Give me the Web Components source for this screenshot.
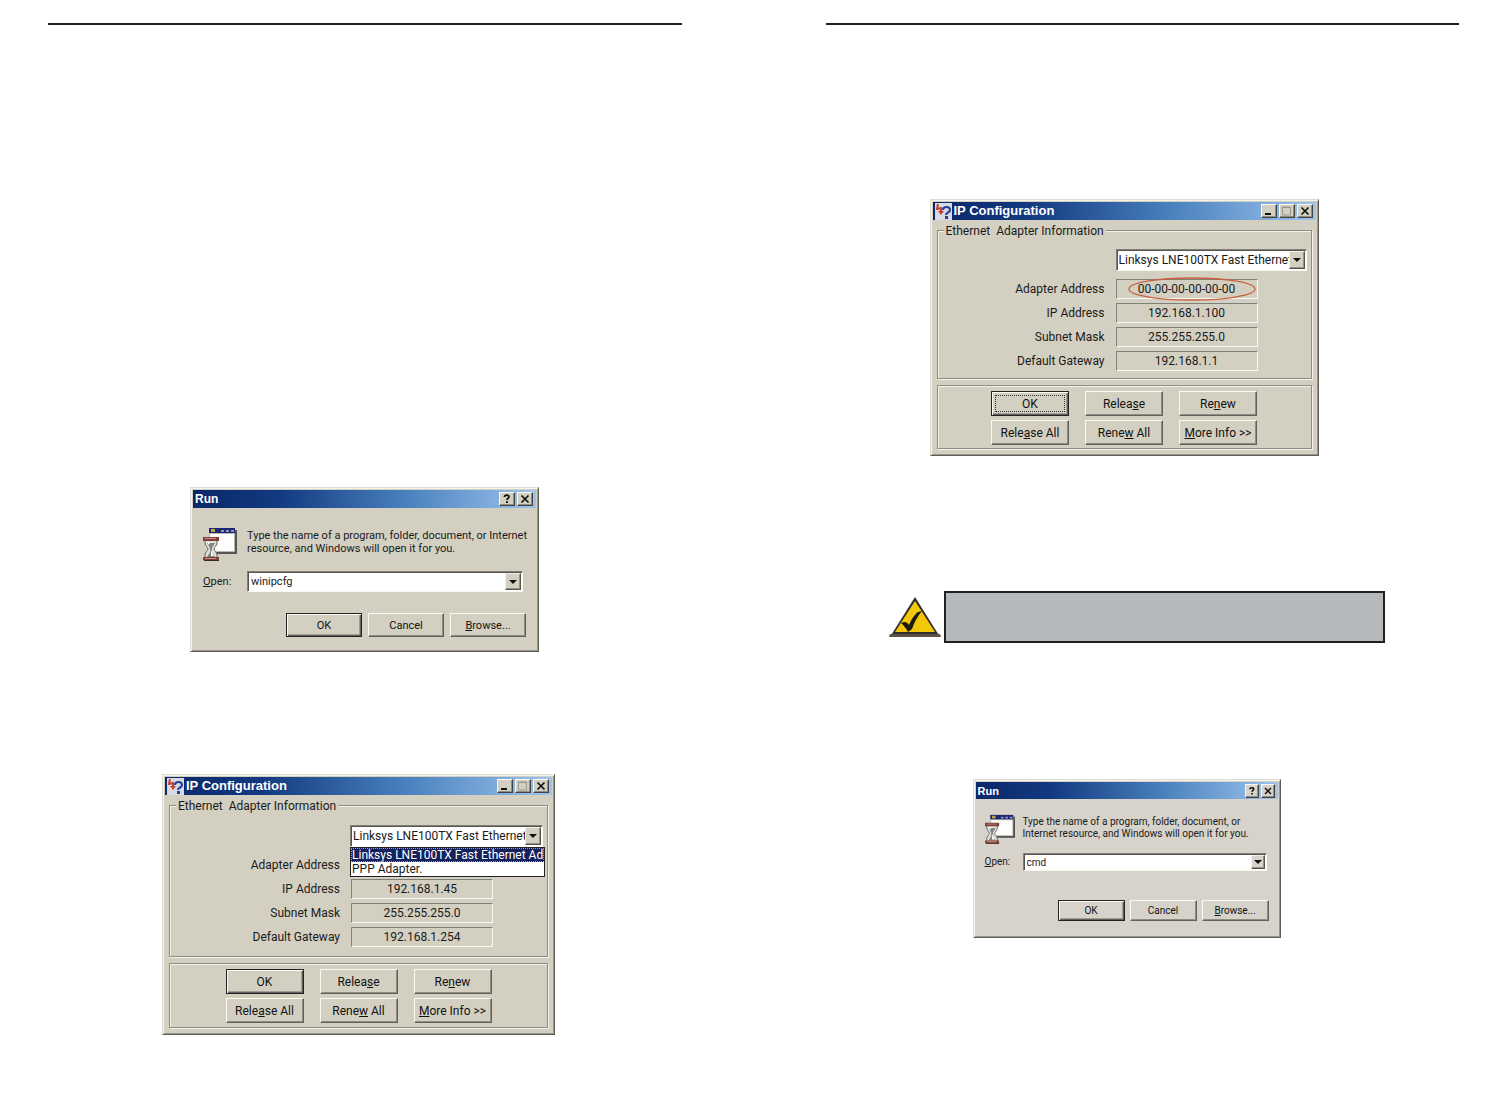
<!DOCTYPE html>
<html lang="en">
<head>
<meta charset="utf-8">
<title>IP Configuration</title>
<style>
  body {
    margin: 0;
    background: #fff;
    font-family: "Liberation Sans", Arial, sans-serif;
  }
  manual-spread {
    min-height: 100vh;
  }
  .run-winipcfg { width: 349px; margin: 462px 0 0 142px; }
  .ip-list { width: 393px; margin: 122px 0 0 114px; --fields-top: 19px; --fields-bottom: 9px; --actions-bottom: 4px; --combo-width: 193px; --indent: 50px; }
  .ip-address { width: 389px; margin: 174px 0 0 104px; }
  .note { margin: 135px 74px 0 63px; }
  .run-cmd { width: 308px; margin: 136px 0 0 147px; }
</style>
</head>
<body>

<manual-spread>
  <manual-page>
    <run-dialog class="run-winipcfg" value="winipcfg">
      Type the name of a program, folder, document, or Internet<br>resource, and Windows will open it for you.
    </run-dialog>
    <ip-config class="ip-list" open ip="192.168.1.45" mask="255.255.255.0" gateway="192.168.1.254"></ip-config>
  </manual-page>
  <manual-page>
    <ip-config class="ip-address" focused mac="00-00-00-00-00-00" ip="192.168.1.100" mask="255.255.255.0" gateway="192.168.1.1"></ip-config>
    <note-box class="note"></note-box>
    <run-dialog class="run-cmd" compact value="cmd">
      Type the name of a program, folder, document, or<br>Internet resource, and Windows will open it for you.
    </run-dialog>
  </manual-page>
</manual-spread>

<script>
const sunken = `
  border: 1px solid;
  border-color: #808078 #fbfaf2 #fbfaf2 #808078;
`;

const arrowStyle = `
  .arrow {
    display: flex;
    align-items: center;
    justify-content: center;
    box-sizing: border-box;
    width: 16px;
    padding: 0;
    background: var(--face, #d3d0c2);
    border: 1px solid;
    border-color: #f4f2e8 #55544f #55544f #f4f2e8;
    box-shadow: inset -1px -1px #96948a;
  }
  .arrow::before {
    content: '';
    border: 4px solid transparent;
    border-top-color: #111;
    border-bottom: 0;
  }
`;

const define = (name, html, setup) => {
  const template = document.createElement('template');
  template.innerHTML = html;
  customElements.define(name, class extends HTMLElement {
    constructor() {
      super();
      this.attachShadow({mode: 'open'});
      this.shadowRoot.appendChild(template.content.cloneNode(true));
    }
    connectedCallback() {
      if (setup) {
        setup(this, this.shadowRoot);
      }
    }
  });
};

define('manual-spread', `
  <style>
    :host {
      display: grid;
      grid-template-columns: 1fr 1fr;
      gap: 144px;
      box-sizing: border-box;
      padding: 23px 49px 0 48px;
    }
  </style>
  <slot></slot>
`);

define('manual-page', `
  <style>
    :host {
      display: flex;
      flex-direction: column;
      align-items: flex-start;
      border-top: 2px solid #231f20;
    }
    ::slotted(note-box) { align-self: stretch; }
  </style>
  <slot></slot>
`);

define('win-button', `
  <style>
    :host { display: block; }
    button {
      display: block;
      box-sizing: border-box;
      width: 100%;
      height: var(--button-height, 25px);
      padding: 0;
      background: var(--face, #d3d0c2);
      border: 1px solid;
      border-color: #fbfaf2 #62605a #62605a #fbfaf2;
      box-shadow: inset -1px -1px #8e8c83;
      color: #111;
      font: inherit;
      line-height: 1;
    }
    :host([default]) button {
      border: 1px solid #222;
      box-shadow: inset 1px 1px #fbfaf2, inset -1px -1px #62605a, inset -2px -2px #a09e94;
    }
    :host([focused]) button {
      outline: 1px dotted #333;
      outline-offset: -5px;
    }
  </style>
  <button type="button"><slot></slot></button>
`);

define('win-caption', `
  <style>
    :host { display: block; }
    button {
      display: block;
      box-sizing: border-box;
      width: var(--caption-width, 16px);
      height: 14px;
      padding: 0;
      background: var(--face, #d3d0c2);
      border: 1px solid;
      border-color: #fbfaf2 #44433f #44433f #fbfaf2;
      box-shadow: inset -1px -1px #8e8c83;
      color: #111;
    }
    svg { display: block; width: 100%; height: 12px; }
  </style>
  <button type="button"></button>
`, (el, root) => {
  const glyphs = {
    minimize: '<path d="M3 9h6" stroke="#111" stroke-width="2"/>',
    maximize: '<path d="M2.500 2h8v8h-8z" fill="none" stroke="#9b998f"/><path d="M2 2.500h9" stroke="#9b998f"/>',
    help: '<path d="M4.500 4C4.500 1.500 9 1.500 9 3.800C9 5.200 7 5.200 7 7" fill="none" stroke="#111" stroke-width="1.800"/><path d="M6 8.300h2v1.800H6z" fill="#111"/>',
    close: '<path d="M3.500 2.500l7 7M10.500 2.500l-7 7" stroke="#111" stroke-width="1.700"/>'
  };
  const type = el.getAttribute('type');
  const button = root.querySelector('button');
  button.setAttribute('aria-label', type);
  button.innerHTML = `<svg viewBox="0 0 14 12">${glyphs[type]}</svg>`;
});

define('win-dialog', `
  <style>
    :host {
      display: block;
      box-sizing: border-box;
      padding: 1px;
      background: var(--face, #d3d0c2);
      border: 1px solid;
      border-color: #dedbd0 #5e5d58 #5e5d58 #dedbd0;
      box-shadow: inset 1px 1px #f6f4ea, inset -1px -1px #98968c;
      color: #1a1a1a;
    }
    header {
      display: flex;
      align-items: center;
      gap: 2px;
      height: var(--title-height, 18px);
      margin: 1px;
      padding: 0 3px 0 2px;
      background: linear-gradient(90deg, #0b2769, #123a80 25%, #4a80bd 62%, #9cc4ee);
      color: #fff;
    }
    h2 {
      flex: 1;
      margin: 0;
      font-family: "Liberation Sans", Arial, sans-serif;
      font-size: var(--title-size, 12px);
      line-height: 16px;
      font-weight: bold;
    }
    .captions { display: flex; gap: 2px; }
  </style>
  <header>
    <slot name="icon"></slot>
    <h2></h2>
    <div class="captions"><slot name="captions"></slot></div>
  </header>
  <slot></slot>
`, (el, root) => {
  root.querySelector('h2').textContent = el.getAttribute('heading');
});

define('run-dialog', `
  <style>
    :host {
      display: block;
      --button-height: 24px;
      font-size: 11px;
      font-family: Roboto, "Liberation Sans", sans-serif;
    }
    :host([compact]) {
      --face: #d7d3cb;
      --button-height: 21px;
      --caption-width: 14px;
      --title-size: 11px;
      --title-height: 17px;
      font-size: 10px;
    }
    .body {
      display: grid;
      grid-template-columns: 34px minmax(0, 1fr);
      column-gap: 10px;
      padding: 18px 11px 13px 11px;
    }
    :host([compact]) .body {
      grid-template-columns: 30px minmax(0, 1fr);
      column-gap: 8px;
      padding: 14px 10px 15px 10px;
    }
    .icon { width: 34px; height: 34px; }
    p { margin: 0; padding-top: 2px; line-height: 13px; white-space: nowrap; }
    label { align-self: center; margin-top: 10px; }
    .combo {
      display: flex;
      box-sizing: border-box;
      height: 21px;
      margin: 10px 3px 0 0;
      background: #fff;
      ${sunken}
      box-shadow: inset 1px 1px #55544f;
      padding: 1px;
    }
    input {
      flex: 1;
      min-width: 0;
      padding: 0 2px;
      border: 0;
      background: none;
      color: inherit;
      font: inherit;
      outline: 0;
    }
    .buttons {
      grid-column: 1 / -1;
      display: grid;
      grid-template-columns: repeat(3, 76px);
      justify-content: end;
      gap: 6px;
      margin-top: 21px;
    }
    :host([compact]) .icon { width: 30px; height: 30px; }
    :host([compact]) p { line-height: 12px; }
    :host([compact]) label { margin-top: 8px; }
    :host([compact]) .combo { height: 18px; margin: 9px 2px 0 0; }
    :host([compact]) .arrow { width: 14px; }
    :host([compact]) .buttons { grid-template-columns: repeat(3, 67px); gap: 5px; margin-top: 29px; }
    ${arrowStyle}
  </style>
  <win-dialog heading="Run">
    <win-caption slot="captions" type="help"></win-caption>
    <win-caption slot="captions" type="close"></win-caption>
    <div class="body">
      <svg class="icon" viewBox="0 0 34 34" aria-hidden="true">
        <path d="M8 3h26v24H8z" fill="#55554f"/>
        <path d="M6 1h26v24H6z" fill="#b9b8b2"/>
        <path d="M7 7h24v17H7z" fill="#fdfdfb"/>
        <path d="M6 1h26v5H6z" fill="#1c2672"/>
        <path d="M8 2h4v3H8z" fill="#c7a43c"/>
        <path d="M18 3h3v2h-3zM23 3h3v2h-3zM28 3h3v2h-3z" fill="#8f95c4"/>
        <path d="M2 13h12v3c0 3-3 4-3 6s3 3 3 6v3H2v-3c0-3 3-4 3-6s-3-3-3-6z" fill="#dedfdc" stroke="#62625f"/>
        <path d="M4 16h8l-3 5v4l3 5H4l3-5v-4z" fill="#85867f"/>
        <path d="M8 23l3 6H8zM4 15h3l-1 3z" fill="#fff"/>
        <path d="M0 10h16v4H0zM0 30h16v3H0z" fill="#7d4038"/>
        <path d="M2 11h11v1H2zM2 31h11v1H2z" fill="#c88a80"/>
        <path d="M1 33h15v1H1z" fill="#3d2826"/>
      </svg>
      <p><slot></slot></p>
      <label for="open"><u>O</u>pen:</label>
      <div class="combo">
        <input id="open" type="text" spellcheck="false">
        <button class="arrow" type="button" aria-label="Show history"></button>
      </div>
      <div class="buttons">
        <win-button default>OK</win-button>
        <win-button>Cancel</win-button>
        <win-button><u>B</u>rowse...</win-button>
      </div>
    </div>
  </win-dialog>
`, (el, root) => {
  root.querySelector('input').value = el.getAttribute('value');
});

define('ip-config', `
  <style>
    :host {
      display: block;
      --title-size: 13px;
      font-size: 12px;
      font-family: Roboto, "Liberation Sans", sans-serif;
    }
    .body { padding: 1px 5px 5px 5px; }
    .icon { width: 17px; height: 17px; }
    fieldset, .actions {
      box-sizing: border-box;
      margin: 0;
      border: 1px solid #8e8c83;
      box-shadow: inset 1px 1px #f4f2e8, 1px 1px #f4f2e8;
    }
    fieldset {
      position: relative;
      min-width: 0;
      padding: var(--fields-top, 18px) 4px var(--fields-bottom, 7px);
      margin-top: 8px;
    }
    /* the caption sits on the frame line */
    .caption {
      position: absolute;
      top: -8px;
      left: 6px;
      padding: 0 2px;
      background: #d3d0c2;
      line-height: 16px;
      white-space: pre;
    }
    .fields {
      display: grid;
      grid-template-columns: 1fr 142px var(--indent, 49px);
      gap: 4px 0;
      margin-top: 8px;
    }
    .fields label {
      grid-column: 1;
      align-self: center;
      padding-right: 11px;
      text-align: right;
    }
    output {
      position: relative;
      grid-column: 2;
      box-sizing: border-box;
      height: 20px;
      ${sunken}
      line-height: 18px;
      text-align: center;
    }
    .mark {
      position: absolute;
      left: 11px;
      top: -3px;
      width: 128px;
      height: 24px;
    }
    .adapter { position: relative; margin-left: auto; width: var(--combo-width, 191px); }
    .combo {
      display: flex;
      box-sizing: border-box;
      height: 22px;
      padding: 1px;
      background: #fff;
      ${sunken}
      box-shadow: inset 1px 1px #55544f;
    }
    select {
      flex: 1;
      min-width: 0;
      padding: 0 0 0 1px;
      border: 0;
      background: none;
      color: #1a1a1a;
      font: inherit;
      appearance: none;
      outline: 0;
    }
    ul {
      position: absolute;
      z-index: 1;
      top: 22px;
      left: 0;
      right: -2px;
      margin: 0;
      padding: 0;
      background: #fff;
      border: 1px solid #222;
      list-style: none;
      line-height: 14px;
    }
    li { padding-left: 1px; white-space: nowrap; }
    li[aria-selected="true"] {
      background: #14215c;
      color: #fff;
      outline: 1px dotted #a9a46c;
      outline-offset: -1px;
    }
    .actions {
      display: grid;
      grid-template-columns: repeat(3, 78px);
      justify-content: center;
      gap: 4px 16px;
      margin-top: 6px;
      padding: 5px 0 var(--actions-bottom, 3px);
    }
    ${arrowStyle}
  </style>
  <win-dialog heading="IP Configuration">
    <svg class="icon" slot="icon" viewBox="0 0 17 17" aria-hidden="true">
      <path d="M0 0h17v17H0z" fill="#d9dbe4"/>
      <path d="M3 1L2 6l4-1v4" fill="none" stroke="#c4402f" stroke-width="2"/>
      <path d="M3 8h6l-3 4z" fill="#c4402f"/>
      <path d="M8 7c0-4 7-4 7 0 0 3-4 2-4 5" fill="none" stroke="#273c94" stroke-width="2"/>
      <path d="M10 13h3v3h-3z" fill="#273c94"/>
    </svg>
    <win-caption slot="captions" type="minimize"></win-caption>
    <win-caption slot="captions" type="maximize"></win-caption>
    <win-caption slot="captions" type="close"></win-caption>
    <div class="body">
      <fieldset aria-labelledby="caption">
        <div class="caption" id="caption">Ethernet  Adapter Information</div>
        <div class="adapter">
          <div class="combo">
            <select aria-label="Ethernet adapter">
              <option>Linksys LNE100TX Fast Ethernet Adapter</option>
              <option>PPP Adapter.</option>
            </select>
            <span class="arrow"></span>
          </div>
        </div>
        <div class="fields">
          <label for="mac">Adapter Address</label><output id="mac"></output>
          <label for="ip">IP Address</label><output id="ip"></output>
          <label for="mask">Subnet Mask</label><output id="mask"></output>
          <label for="gateway">Default Gateway</label><output id="gateway"></output>
        </div>
      </fieldset>
      <div class="actions">
        <win-button default>OK</win-button>
        <win-button>Relea<u>s</u>e</win-button>
        <win-button>Re<u>n</u>ew</win-button>
        <win-button>Rele<u>a</u>se All</win-button>
        <win-button>Rene<u>w</u> All</win-button>
        <win-button><u>M</u>ore Info &gt;&gt;</win-button>
      </div>
    </div>
  </win-dialog>
`, (el, root) => {
  ['mac', 'ip', 'mask', 'gateway'].forEach(id => {
    root.getElementById(id).textContent = el.getAttribute(id) || '';
  });
  if (el.hasAttribute('mac')) {
    root.getElementById('mac').insertAdjacentHTML('beforeend',
      '<svg class="mark" viewBox="0 0 128 24"><ellipse cx="64" cy="12" rx="63" ry="11" fill="none" stroke="#c8623f" stroke-width="1.300"/></svg>');
  }
  if (el.hasAttribute('focused')) {
    root.querySelector('win-button').setAttribute('focused', '');
  }
  if (el.hasAttribute('open')) {
    root.querySelector('.adapter').insertAdjacentHTML('beforeend', `
      <ul role="listbox" aria-label="Adapters">
        <li role="option" aria-selected="true">Linksys LNE100TX Fast Ethernet Ad</li>
        <li role="option" aria-selected="false">PPP Adapter.</li>
      </ul>`);
  }
});

define('note-box', `
  <style>
    :host { display: flex; align-items: center; gap: 3px; }
    svg { flex: none; width: 52px; height: 42px; }
    .text {
      flex: 1;
      box-sizing: border-box;
      min-height: 52px;
      padding: 8px;
      background: #b5b9bc;
      border: 2px solid #231f20;
    }
  </style>
  <svg viewBox="0 0 52 42" aria-hidden="true">
    <path d="M1 41L26 1l25 40z" fill="#2f2c29"/>
    <path d="M1 38h50l1 3H0z" fill="#5b5147"/>
    <path d="M6 36L26 5l20 31z" fill="#f3c808"/>
    <path d="M12 27c4-2 6-1 8 2 3-7 6-11 9-13l4-1c-5 6-8 12-10 18l-4 3c-2-4-4-6-7-9z" fill="#1d1a14"/>
  </svg>
  <div class="text"><slot></slot></div>
`);
</script>
</body>
</html>
